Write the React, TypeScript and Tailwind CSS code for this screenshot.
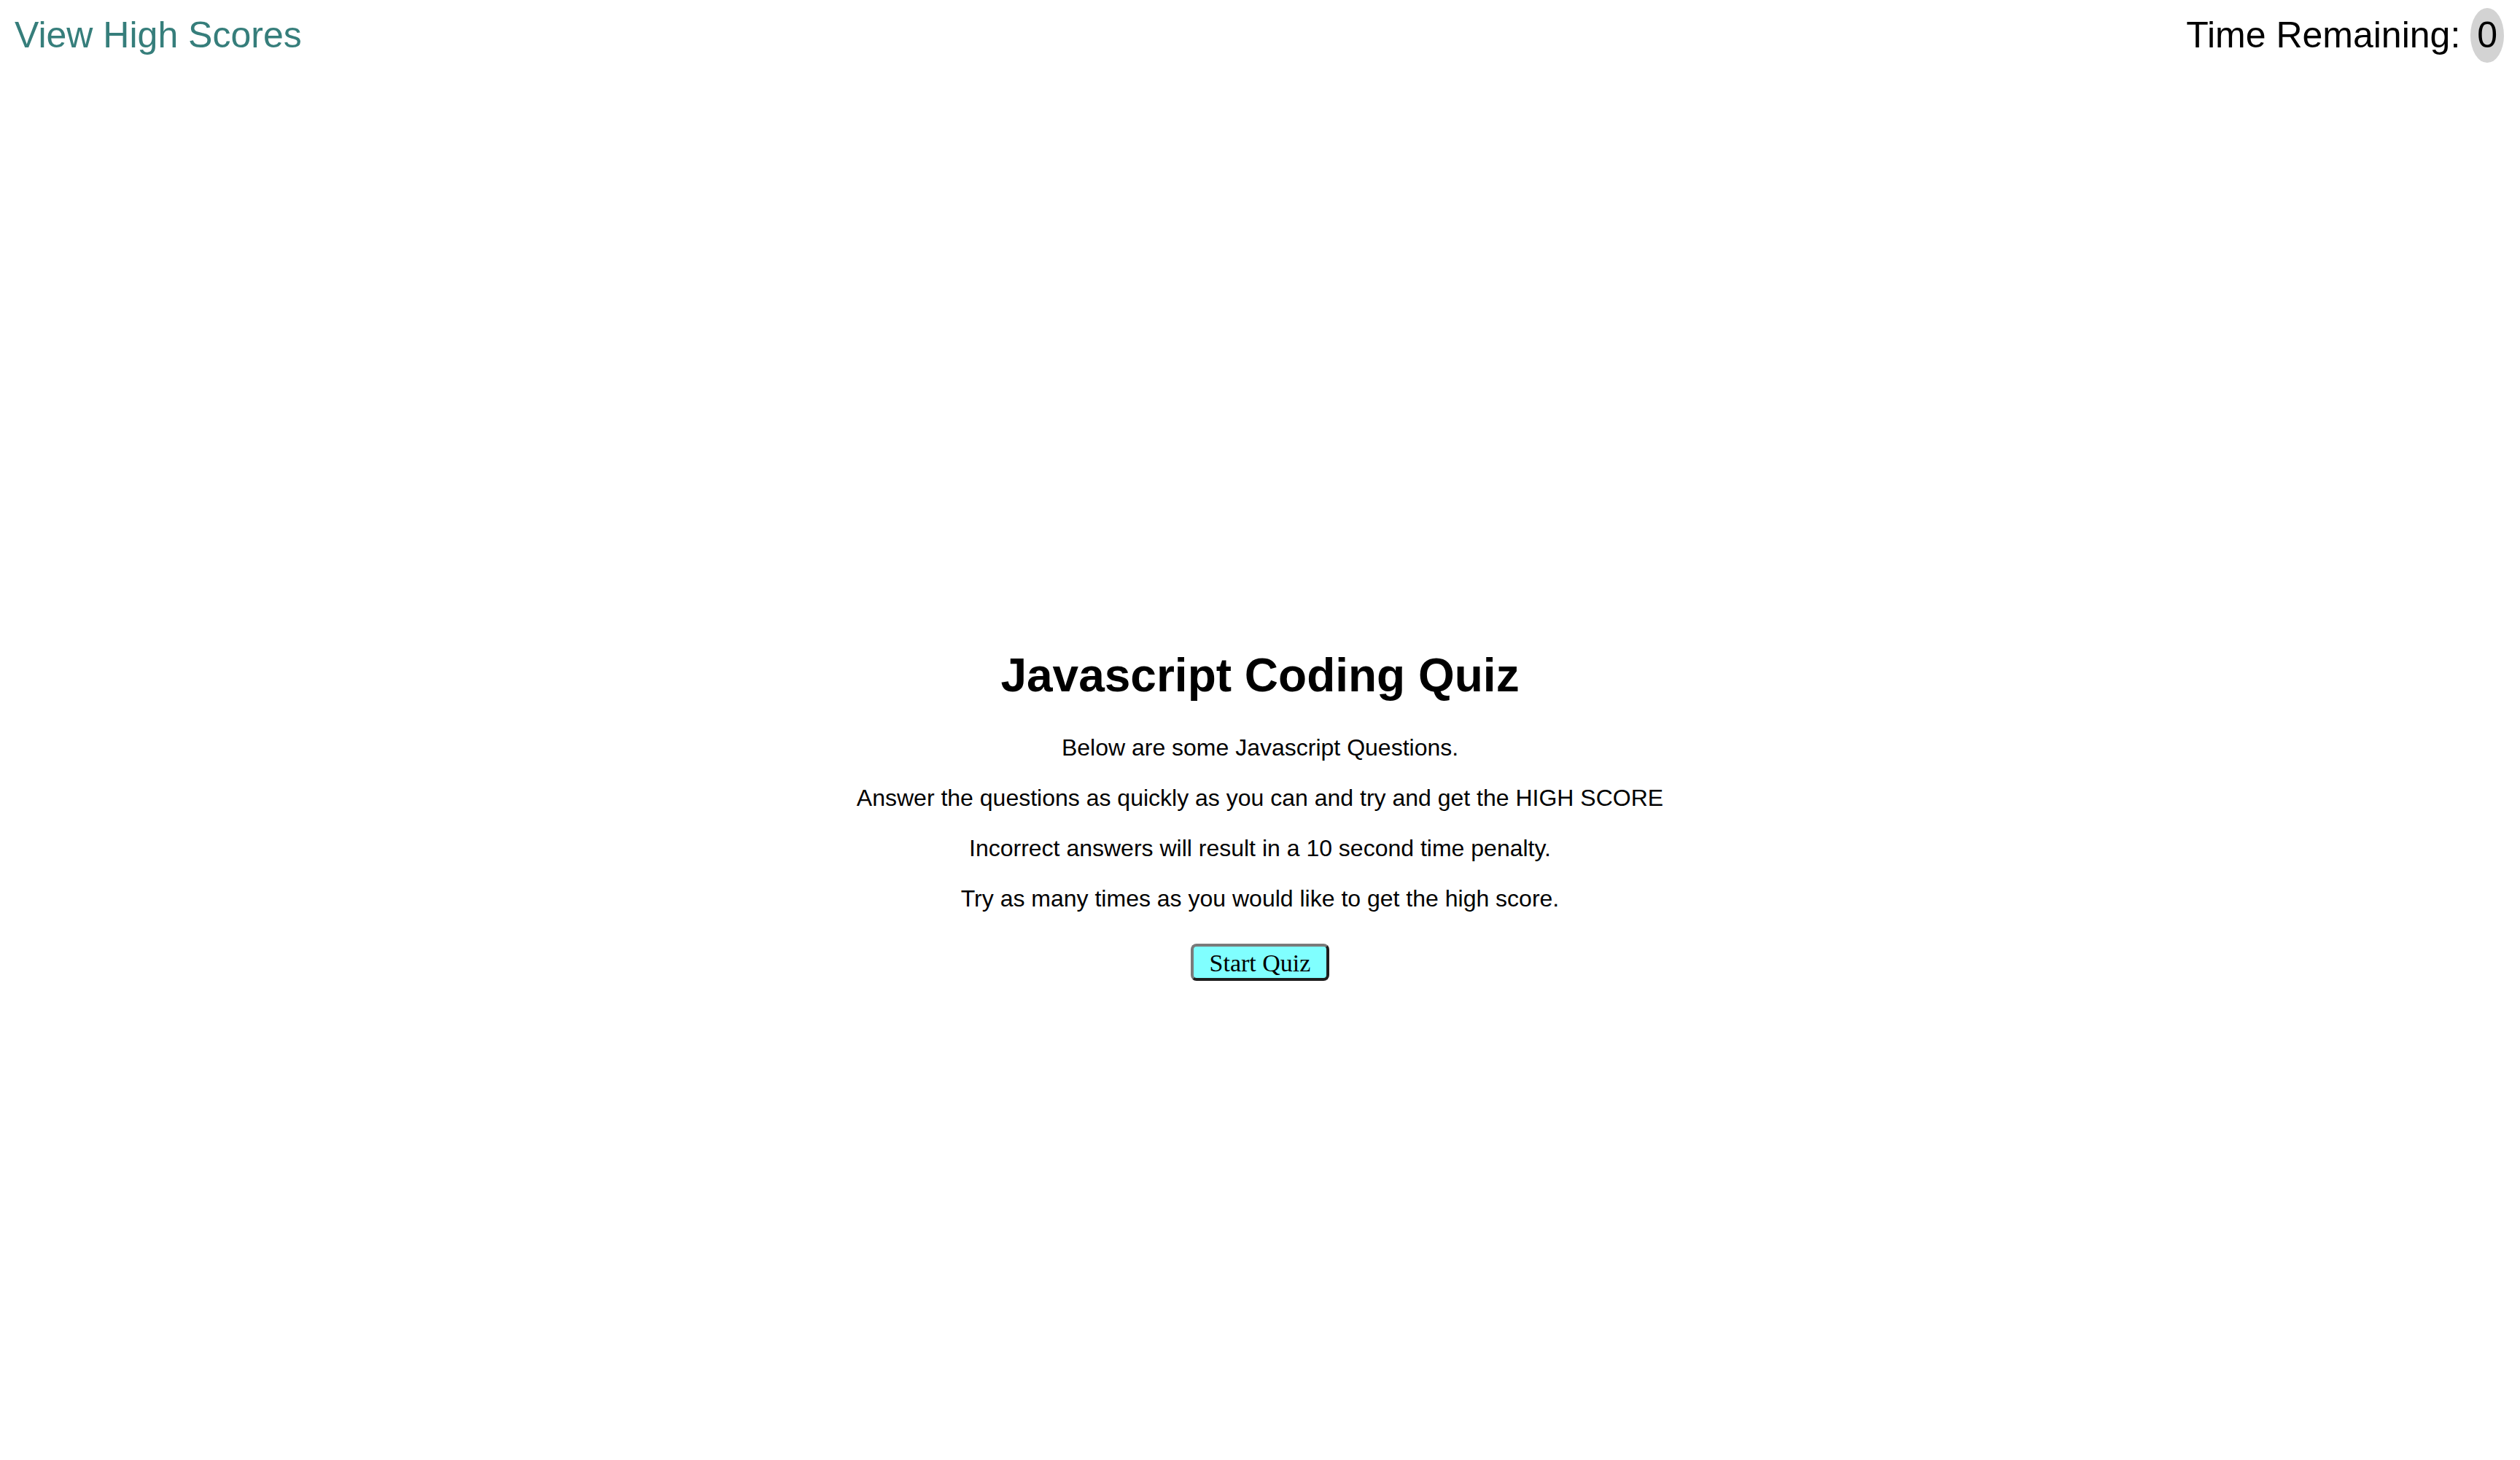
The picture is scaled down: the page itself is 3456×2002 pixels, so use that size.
export default function App() {
  const rules = [
    'Below are some Javascript Questions.',
    'Answer the questions as quickly as you can and try and get the HIGH SCORE',
    'Incorrect answers will result in a 10 second time penalty.',
    'Try as many times as you would like to get the high score.',
  ]

  return (
    <div className="min-h-screen bg-white text-black font-['Liberation_Sans',Arial,sans-serif]">
      <header className="flex items-center justify-between pl-[20px] pr-[22px] pt-[11px]">
        <a href="#" className="text-[50px] leading-[57px] text-[#367e7b]">
          View High Scores
        </a>
        <div className="flex items-center text-[50px] leading-[57px]">
          <span>Time Remaining:&nbsp;</span>
          <span className="rounded-[50%] bg-[#d3d3d3] px-[9px] py-[9px]">0</span>
        </div>
      </header>

      <main className="mt-[803px] flex flex-col items-center text-center">
        <h1 className="text-[64px] font-bold leading-[74px]">Javascript Coding Quiz</h1>
        <div className="mt-[44px] flex flex-col gap-[32px] text-[32px] leading-[37px]">
          {rules.map((r) => (
            <p key={r}>{r}</p>
          ))}
        </div>
        <button
          type="button"
          className="mt-[43px] h-[51px] w-[190px] rounded-[8px] border-4 border-t-[#7a7a7a] border-l-[#7a7a7a] border-r-[#1e1e1e] border-b-[#1e1e1e] bg-[#80ffff] pt-[2px] font-['Liberation_Serif','DejaVu_Serif',serif] text-[34px] leading-[38px] text-black"
        >
          Start Quiz
        </button>
      </main>
    </div>
  )
}
